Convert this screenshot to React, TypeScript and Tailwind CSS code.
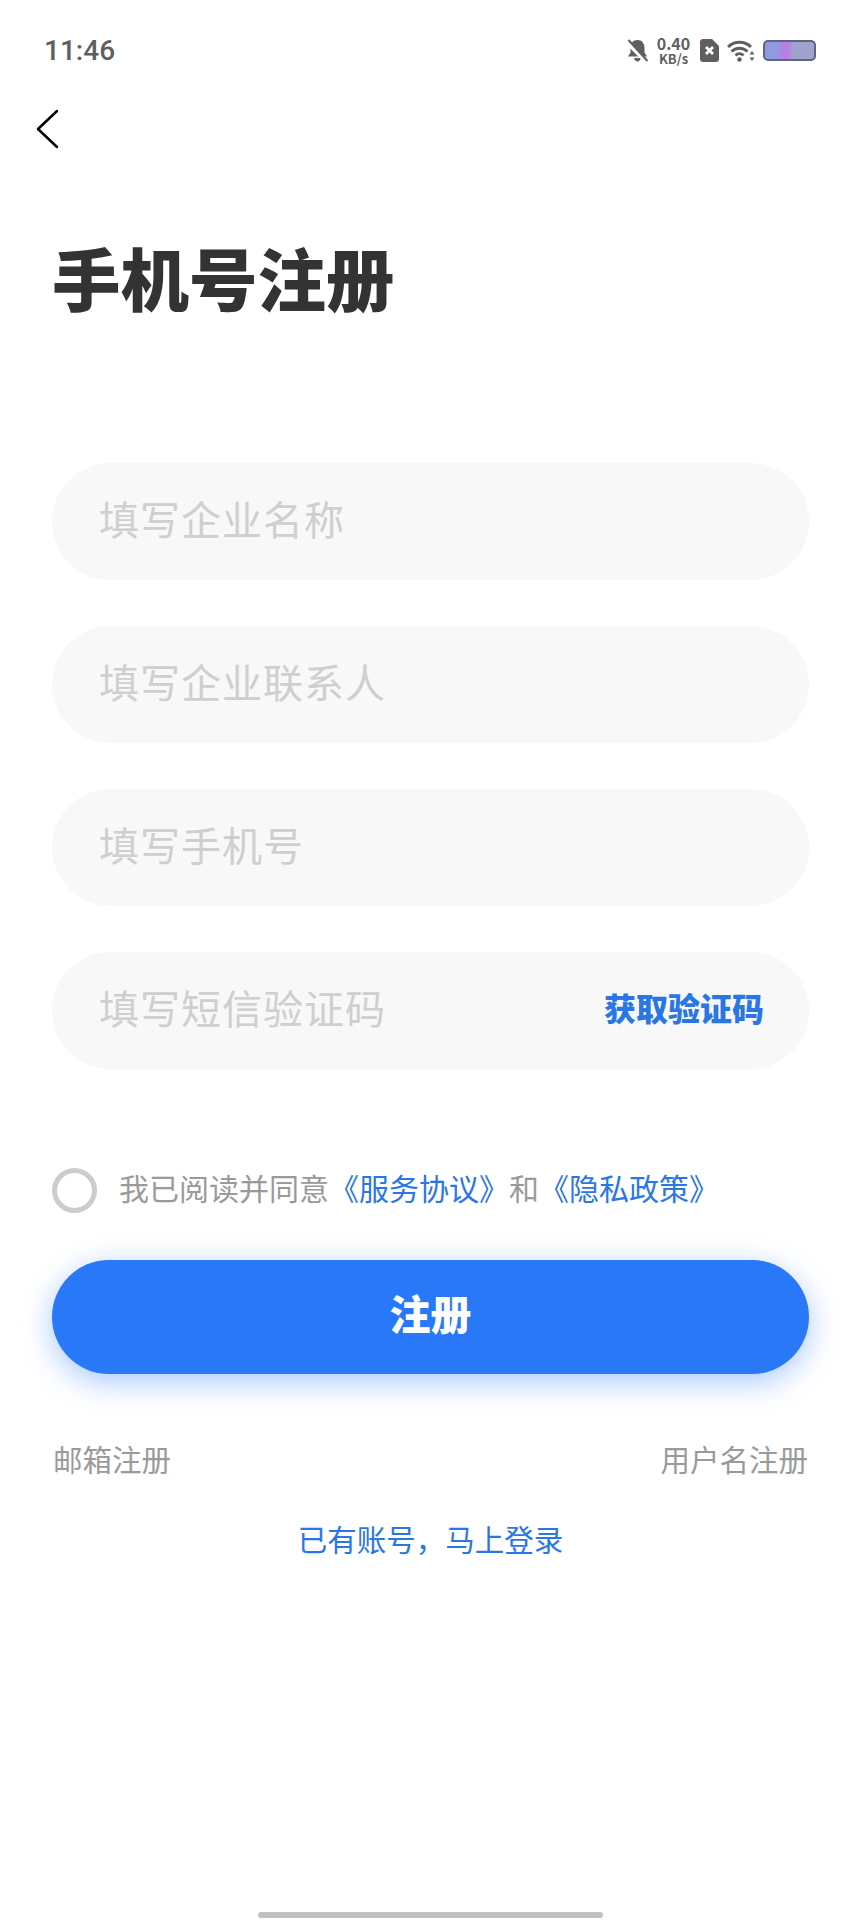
const fields = ['填写企业名称', '填写企业联系人', '填写手机号', '填写短信验证码'];

const StatusIcons = () => (
  <div className="flex items-center text-[#5f5f5f]">
    {/* Muted bell */}
    <svg width="21" height="23" viewBox="0 0 21 23" className="mr-[7px]">
      <path d="M10.500 1C6 1 3.500 4.500 3.500 9v4.500L1 17.500h19L17.500 13.500V9C17.500 4.500 15 1 10.500 1z" fill="currentColor" />
      <path d="M7 19c.5 2 1.800 3.500 3.500 3.500S13.500 21 14 19z" fill="currentColor" />
      <path d="M0 3l19 19" stroke="#fff" strokeWidth="4.500" />
      <path d="M1.500 1l19 21" stroke="currentColor" strokeWidth="2.200" />
    </svg>
    <div className="flex flex-col items-center w-[37px] font-semibold">
      <span className="text-[16px] leading-[17px]">0.40</span>
      <span className="text-[13px] leading-[14px]">KB/s</span>
    </div>
    {/* SIM without signal */}
    <svg width="19" height="23" viewBox="0 0 19 23" className="ml-[8px]">
      <path d="M3 0h9l7 7v13a3 3 0 0 1-3 3H3a3 3 0 0 1-3-3V3a3 3 0 0 1 3-3z" fill="currentColor" />
      <path d="M6 8l7 7M13 8l-7 7" stroke="#fff" strokeWidth="2.800" />
    </svg>
    {/* Wifi */}
    <svg width="28" height="22" viewBox="0 0 28 22" className="ml-[8px]" fill="none" stroke="currentColor" strokeWidth="3">
      <path d="M1 7C7.500 .8 17.500 .8 24 7" />
      <path d="M4.500 11.500C9 7 16 7 20.500 11.500" />
      <path d="M8.500 15.500C11 13 14 13 16.500 15.500" />
      <circle cx="12.500" cy="19.500" r="2.200" fill="currentColor" stroke="none" />
      <path d="M25 11l-2.500 3.500h5zM25 21l-2.500-3.500h5z" fill="currentColor" stroke="none" />
    </svg>
    {/* Battery */}
    <div className="ml-[8px] w-[53px] h-[21px] rounded-[5px] border-[2px] border-[#5f6480] bg-[linear-gradient(90deg,#8f9be0_0%,#8f9be0_22%,#b57fe6_38%,#b57fe6_46%,#9ea2cc_58%,#9ea2cc_100%)]" />
  </div>
);

export default function App() {
  return (
    <div className="w-[861px] h-[1920px] bg-white flex flex-col font-['Noto_Sans_CJK_SC','Noto_Sans',sans-serif]">
      {/* Status bar */}
      <div className="h-[100px] pl-[44px] pr-[45px] pt-[34px] flex items-start justify-between">
        <span className="text-[28px] leading-[34px] font-medium text-[#5f5f5f] font-['Roboto','Noto_Sans_CJK_SC',sans-serif]">11:46</span>
        <div className="pt-[1px]"><StatusIcons /></div>
      </div>

      {/* Back */}
      <svg width="24" height="40" viewBox="0 0 24 40" className="ml-[36px] mt-[9px]" fill="none" stroke="#000" strokeWidth="2.500" strokeLinecap="round" strokeLinejoin="round">
        <path d="M21 2L2 20l19 18" />
      </svg>

      <h1 className="mt-[88px] ml-[52px] text-[68.5px] leading-[80px] font-black text-[#333]">手机号注册</h1>

      {/* Form */}
      <div className="mt-[146px] px-[52px] flex flex-col gap-[46px]">
        {fields.map((f, i) => (
          <div key={f} className="h-[117px] rounded-full bg-[#f8f8f8] pl-[47px] pr-[45px] pb-[8px] flex items-center justify-between">
            <span className="text-[40px] text-[#cfcfcf] tracking-[1px]">{f}</span>
            {i === 3 && <span className="text-[32px] font-black text-[#2b76e5]">获取验证码</span>}
          </div>
        ))}
      </div>

      {/* Agreement */}
      <div className="mt-[98px] pl-[52px] flex items-center h-[46px]">
        <div className="w-[45px] h-[45px] rounded-full border-[5px] border-[#cccccc]" />
        <p className="ml-[22px] pb-[5px] text-[30px] text-[#9a9a9a] whitespace-nowrap">
          我已阅读并同意<span className="text-[#2b76e5]">《服务协议》</span>和<span className="text-[#2b76e5]">《隐私政策》</span>
        </p>
      </div>

      {/* Submit */}
      <button className="mt-[47px] mx-[52px] h-[114px] pb-[8px] rounded-full bg-[#2878f8] text-white text-[41px] font-black shadow-[0_8px_30px_rgba(40,120,248,0.4)]">
        注册
      </button>

      <div className="mt-[62px] px-[53px] flex justify-between text-[29.5px] text-[#9a9a9a]">
        <span>邮箱注册</span>
        <span>用户名注册</span>
      </div>
      <div className="mt-[36px] text-center text-[29.5px] text-[#2b76e5]">已有账号，马上登录</div>

      <div className="mt-auto mb-[2px] mx-auto w-[345px] h-[6px] rounded-full bg-[#c0c0c0]" />
    </div>
  );
}
